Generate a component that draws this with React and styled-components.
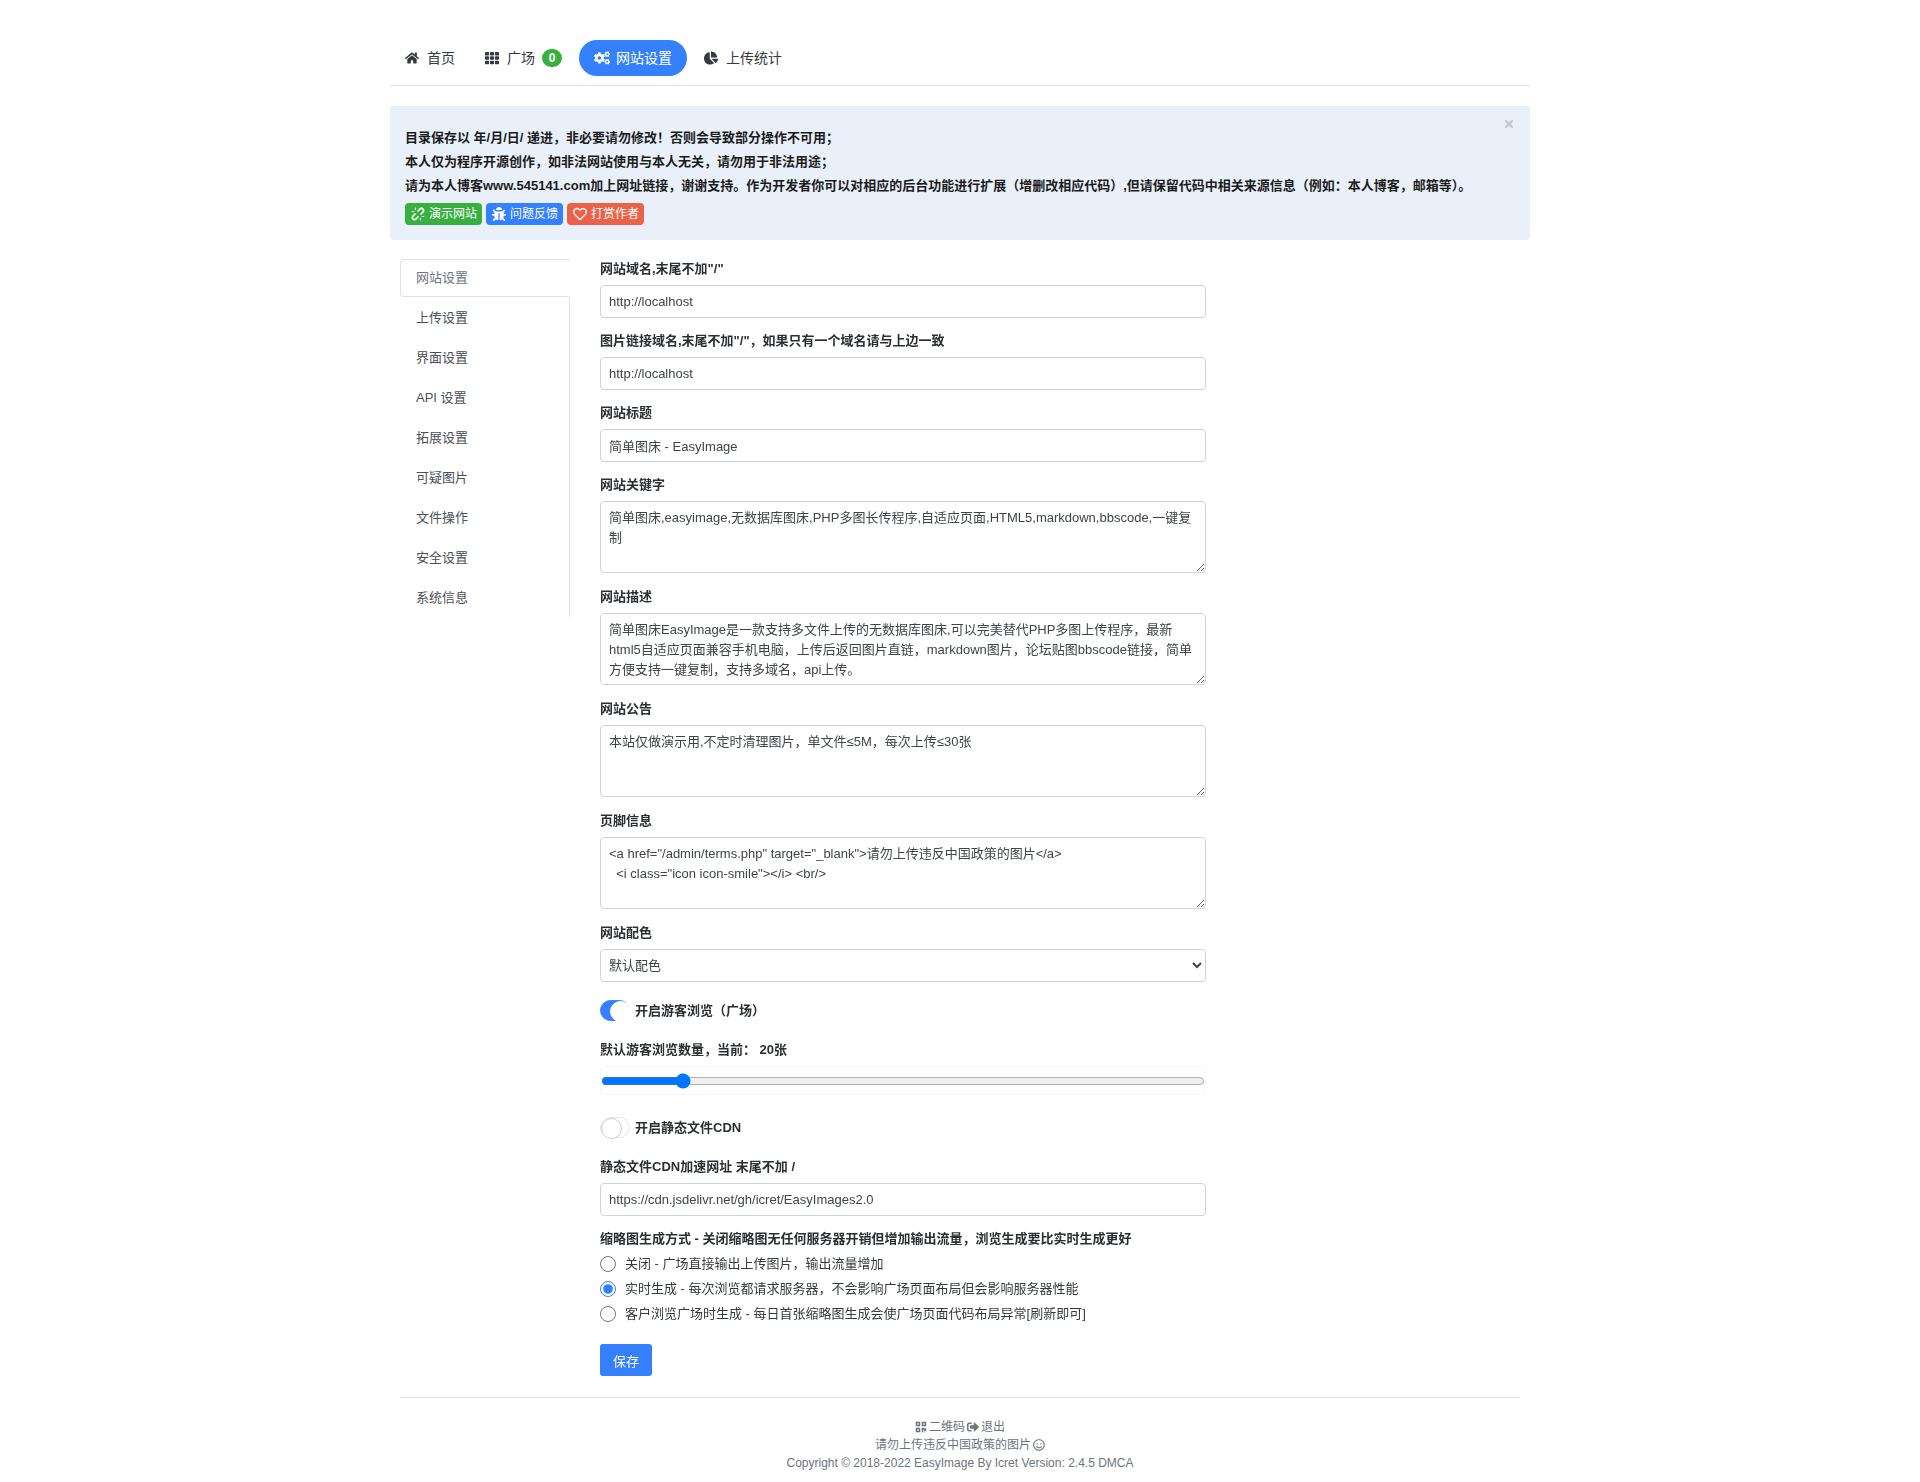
import React from "react";
import styled, { createGlobalStyle } from "styled-components";
import {
  FaHome,
  FaTh,
  FaCogs,
  FaChartPie,
  FaBug,
  FaRegHeart,
  FaQrcode,
  FaSignOutAlt,
  FaRegSmile,
  FaTimes,
} from "react-icons/fa";

const GlobalStyle = createGlobalStyle`
  html, body {
    margin: 0;
    padding: 0;
    background: #fff;
  }
  body {
    font-family: "Liberation Sans", "Noto Sans CJK SC", sans-serif;
    font-size: 13px;
    line-height: 1.5;
    color: #212529;
  }
  * {
    box-sizing: border-box;
  }
`;

const Page = styled.div`
  width: 1140px;
  margin: 0 auto;
  padding-top: 40px;
`;

const Nav = styled.nav`
  display: flex;
  align-items: center;
  height: 46px;
  padding-bottom: 9px;
  border-bottom: 1px solid #dee2e6;
`;

const NavLink = styled.a`
  display: flex;
  align-items: center;
  gap: ${({ $active }) => ($active ? "6px" : "8px")};
  height: 36px;
  margin: ${({ $active }) => ($active ? "0 2px" : "0")};
  padding: 0 15px;
  border-radius: 18px;
  font-size: 14px;
  color: ${({ $active }) => ($active ? "#fff" : "#343a40")};
  background: ${({ $active }) => ($active ? "#3480ff" : "transparent")};
  svg {
    font-size: ${({ $active }) => ($active ? "16px" : "14px")};
  }
`;

const Badge = styled.span`
  display: inline-flex;
  align-items: center;
  justify-content: center;
  width: 20px;
  height: 18px;
  margin-left: -1px;
  border-radius: 9px;
  background: #37b03f;
  color: #fff;
  font-size: 12px;
  font-weight: 700;
`;

const Alert = styled.div`
  position: relative;
  margin-top: 20px;
  height: 134px;
  padding: 20px 15px;
  background: #e9f0f9;
  border-radius: 4px;
  font-weight: 700;
  font-size: 13px;
  color: #1c1c1c;
`;

const AlertLine = styled.div`
  line-height: 24px;
`;

const Close = styled.span`
  position: absolute;
  top: 12px;
  right: 15px;
  color: #c3c7cc;
  font-size: 12px;
  line-height: 1;
`;

const Tags = styled.div`
  display: flex;
  gap: 4px;
  margin-top: 5px;
`;

const Tag = styled.a`
  display: flex;
  align-items: center;
  gap: 4px;
  height: 22px;
  padding: 0 5px 0 6px;
  border-radius: 4px;
  color: #fff;
  background: ${({ $bg }) => $bg};
  font-weight: 400;
  font-size: 12px;
  svg {
    width: 14px;
    height: 14px;
  }
`;

const Columns = styled.div`
  display: flex;
  margin-top: 19px;
`;

const Side = styled.div`
  flex: none;
  width: 170px;
  margin-left: 10px;
  align-self: flex-start;
  height: 358px;
  border-right: 1px solid #dee2e6;
`;

const SideItem = styled.a`
  display: flex;
  align-items: center;
  height: ${({ $active }) => ($active ? "38px" : "40px")};
  padding-left: ${({ $active }) => ($active ? "15px" : "16px")};
  color: ${({ $active }) => ($active ? "#6c757d" : "#495057")};
  background: #fff;
  font-size: 13px;
  ${({ $active }) =>
    $active &&
    `
    width: 170px;
    border: 1px solid #dee2e6;
    border-right-color: #fff;
    border-radius: 4px 0 0 4px;
    margin-bottom: 1px;
  `}
`;

const Form = styled.form`
  width: 606px;
  margin-left: 30px;
`;

const Field = styled.div`
  margin-bottom: ${({ $gap }) => $gap || "13px"};
`;

const Label = styled.label`
  display: block;
  margin-bottom: ${({ $tight }) => ($tight ? "2px" : "6px")};
  line-height: 20px;
  font-weight: 700;
  color: #2b2f33;
`;

const inputBase = `
  display: block;
  width: 100%;
  padding: 6px 8px;
  border: 1px solid #ced4da;
  border-radius: 4px;
  background: #fff;
  color: #3f444a;
  font-family: "Liberation Sans", "Noto Sans CJK SC", sans-serif;
  font-size: 13px;
  line-height: 20px;
  outline: none;
`;

const Input = styled.input`
  ${inputBase}
  height: 33px;
`;

const Textarea = styled.textarea`
  ${inputBase}
  height: 72px;
  resize: vertical;
`;

const Select = styled.select`
  ${inputBase}
  height: 33px;
  padding: 0 4px;
`;

const SwitchRow = styled.div`
  display: flex;
  align-items: center;
  gap: 5px;
  height: 21px;
  margin-bottom: 19px;
  font-weight: 700;
  color: #2b2f33;
`;

const Switch = styled.span`
  position: relative;
  flex: none;
  width: 30px;
  height: 21px;
  border-radius: 11px;
  border: 1px solid ${({ $on }) => ($on ? "#3480ff" : "#e3e5e8")};
  background: ${({ $on }) => ($on ? "#3480ff" : "#fff")};
  &::after {
    content: "";
    position: absolute;
    top: 0;
    left: ${({ $on }) => ($on ? "9px" : "0")};
    width: 19px;
    height: 19px;
    border-radius: 50%;
    background: #fff;
    border: 1px solid ${({ $on }) => ($on ? "#fff" : "#c9cbce")};
  }
`;

const RangeBox = styled.div`
  display: flex;
  align-items: center;
  height: 29px;
  border: 1px solid #f6f6f6;
  border-radius: 4px;
`;

const Range = styled.input`
  width: 100%;
  margin: 0;
  accent-color: #0075ff;
`;

const RadioRow = styled.label`
  display: flex;
  align-items: center;
  gap: 9px;
  height: 25px;
  color: #343a40;
`;

const Radio = styled.input`
  flex: none;
  width: 16px;
  height: 16px;
  margin: 0;
  accent-color: #3480ff;
`;

const Save = styled.button`
  display: block;
  width: 52px;
  height: 32px;
  margin-top: 18px;
  padding: 0;
  border: none;
  border-radius: 3px;
  background: #3480ff;
  color: #fff;
  font-family: inherit;
  font-size: 13px;
`;

const Footer = styled.footer`
  margin: 21px 10px 0;
  padding-top: 20px;
  border-top: 1px solid #dee2e6;
  text-align: center;
  font-size: 12px;
  line-height: 18px;
  color: #6c757d;
`;

const FooterLine = styled.div`
  display: flex;
  justify-content: center;
  align-items: center;
  gap: 2px;
`;

// chain-broken, the package version leans the other way
const UnlinkIcon = () => (
  <svg viewBox="0 0 14 14" fill="none" stroke="currentColor" strokeWidth="1.7" strokeLinecap="round">
    <path d="M7 4 9 2a2.1 2.1 0 0 1 3 3l-2 2" />
    <path d="M7 10l-2 2a2.1 2.1 0 0 1-3-3l2-2" />
    <path d="M4.5 1v1.5M1.2 4.5h1.5M9.5 13v-1.5M12.8 9.5h-1.5" strokeWidth="1.2" />
  </svg>
);

const tabs = [
  "上传设置",
  "界面设置",
  "API 设置",
  "拓展设置",
  "可疑图片",
  "文件操作",
  "安全设置",
  "系统信息",
];

const App = () => (
  <Page>
    <GlobalStyle />
    <Nav>
      <NavLink>
        <FaHome />
        首页
      </NavLink>
      <NavLink>
        <FaTh />
        广场
        <Badge>0</Badge>
      </NavLink>
      <NavLink $active>
        <FaCogs />
        网站设置
      </NavLink>
      <NavLink>
        <FaChartPie />
        上传统计
      </NavLink>
    </Nav>

    <Alert>
      <Close>
        <FaTimes />
      </Close>
      <AlertLine>目录保存以 年/月/日/ 递进，非必要请勿修改！否则会导致部分操作不可用；</AlertLine>
      <AlertLine>本人仅为程序开源创作，如非法网站使用与本人无关，请勿用于非法用途；</AlertLine>
      <AlertLine>
        请为本人博客www.545141.com加上网址链接，谢谢支持。作为开发者你可以对相应的后台功能进行扩展（增删改相应代码）,但请保留代码中相关来源信息（例如：本人博客，邮箱等）。
      </AlertLine>
      <Tags>
        <Tag $bg="#37b03f">
          <UnlinkIcon />
          演示网站
        </Tag>
        <Tag $bg="#3480ff">
          <FaBug />
          问题反馈
        </Tag>
        <Tag $bg="#ec6249">
          <FaRegHeart />
          打赏作者
        </Tag>
      </Tags>
    </Alert>

    <Columns>
      <Side>
        <SideItem $active>网站设置</SideItem>
        {tabs.map((t) => (
          <SideItem key={t}>{t}</SideItem>
        ))}
      </Side>

      <Form>
        <Field>
          <Label>网站域名,末尾不加"/"</Label>
          <Input defaultValue="http://localhost" />
        </Field>
        <Field>
          <Label>图片链接域名,末尾不加"/"，如果只有一个域名请与上边一致</Label>
          <Input defaultValue="http://localhost" />
        </Field>
        <Field>
          <Label>网站标题</Label>
          <Input defaultValue="简单图床 - EasyImage" />
        </Field>
        <Field $gap="14px">
          <Label>网站关键字</Label>
          <Textarea defaultValue="简单图床,easyimage,无数据库图床,PHP多图长传程序,自适应页面,HTML5,markdown,bbscode,一键复制" />
        </Field>
        <Field $gap="14px">
          <Label>网站描述</Label>
          <Textarea defaultValue="简单图床EasyImage是一款支持多文件上传的无数据库图床,可以完美替代PHP多图上传程序，最新html5自适应页面兼容手机电脑，上传后返回图片直链，markdown图片，论坛贴图bbscode链接，简单方便支持一键复制，支持多域名，api上传。" />
        </Field>
        <Field $gap="14px">
          <Label>网站公告</Label>
          <Textarea defaultValue="本站仅做演示用,不定时清理图片，单文件≤5M，每次上传≤30张" />
        </Field>
        <Field $gap="14px">
          <Label>页脚信息</Label>
          <Textarea
            defaultValue={`<a href="/admin/terms.php" target="_blank">请勿上传违反中国政策的图片</a>\n  <i class="icon icon-smile"></i> <br/>`}
          />
        </Field>
        <Field $gap="18px">
          <Label>网站配色</Label>
          <Select defaultValue="default">
            <option value="default">默认配色</option>
          </Select>
        </Field>

        <SwitchRow>
          <Switch $on />
          开启游客浏览（广场）
        </SwitchRow>
        <Field $gap="22px">
          <Label>默认游客浏览数量，当前： 20张</Label>
          <RangeBox>
            <Range type="range" min="0" max="160" defaultValue="20" />
          </RangeBox>
        </Field>
        <SwitchRow>
          <Switch />
          开启静态文件CDN
        </SwitchRow>
        <Field>
          <Label>静态文件CDN加速网址 末尾不加 /</Label>
          <Input defaultValue="https://cdn.jsdelivr.net/gh/icret/EasyImages2.0" />
        </Field>

        <Label $tight>缩略图生成方式 - 关闭缩略图无任何服务器开销但增加输出流量，浏览生成要比实时生成更好</Label>
        <RadioRow>
          <Radio type="radio" name="thumb" />
          关闭 - 广场直接输出上传图片，输出流量增加
        </RadioRow>
        <RadioRow>
          <Radio type="radio" name="thumb" defaultChecked />
          实时生成 - 每次浏览都请求服务器，不会影响广场页面布局但会影响服务器性能
        </RadioRow>
        <RadioRow>
          <Radio type="radio" name="thumb" />
          客户浏览广场时生成 - 每日首张缩略图生成会使广场页面代码布局异常[刷新即可]
        </RadioRow>
        <Save type="button">保存</Save>
      </Form>
    </Columns>

    <Footer>
      <FooterLine>
        <FaQrcode />
        二维码
        <FaSignOutAlt />
        退出
      </FooterLine>
      <FooterLine>
        请勿上传违反中国政策的图片
        <FaRegSmile />
      </FooterLine>
      <div>Copyright © 2018-2022 EasyImage By Icret Version: 2.4.5 DMCA</div>
    </Footer>
  </Page>
);

export default App;
